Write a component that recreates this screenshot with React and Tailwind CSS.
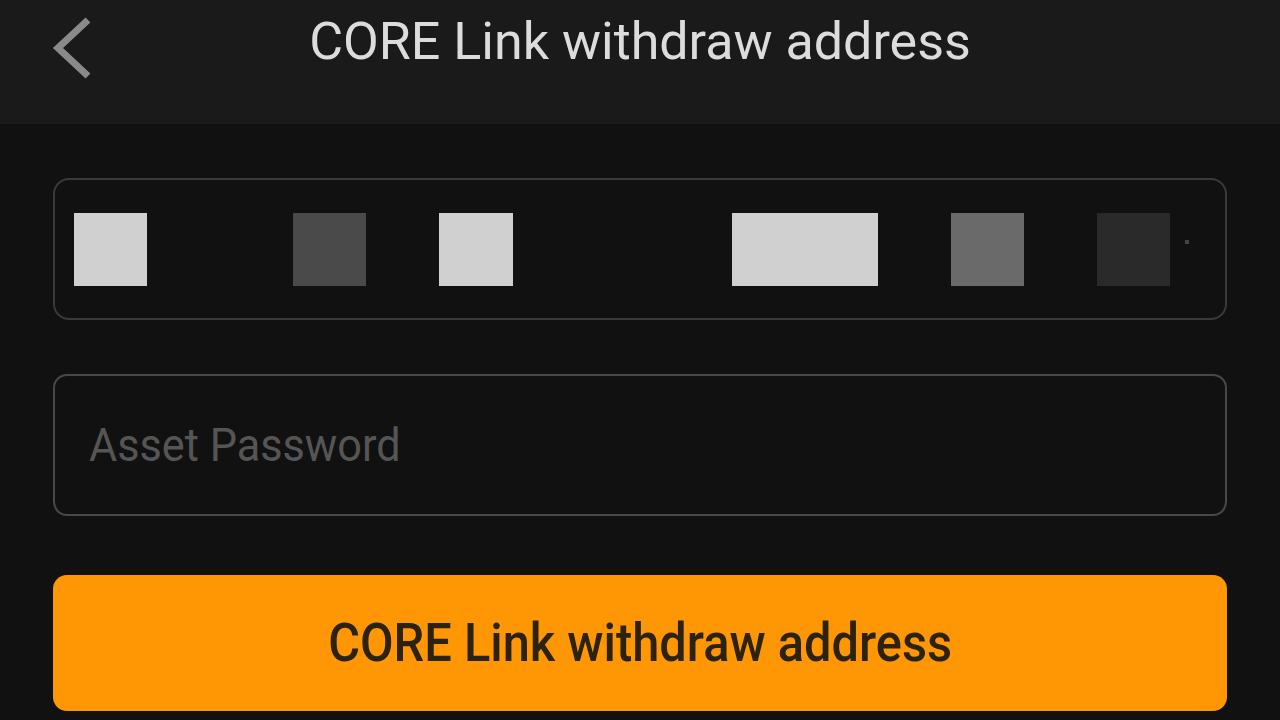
// masked address shown as a row of blocks (one entry per cell)
const cells = ['#d0d0d0', null, null, '#4a4a4a', null, '#d0d0d0', null, null, null, '#d0d0d0', '#d0d0d0', null, '#6a6a6a', null, '#2a2a2a']

export default function App() {
  return (
    <div className="flex h-[720px] w-[1280px] flex-col overflow-hidden bg-[#111111] font-['Roboto',sans-serif]">
      <header className="relative flex h-[124px] shrink-0 items-start justify-center bg-[#1a1a1a]">
        <button type="button" className="absolute left-[50px] top-[14px]">
          <svg width="44" height="68" viewBox="0 0 44 68" fill="none">
            <polyline points="38,6 8,34 38,62" stroke="#8a8a8a" strokeWidth="7" strokeLinejoin="miter" />
          </svg>
        </button>
        <h1 className="mt-[12px] text-[52px] leading-[60px] text-[#dcdcdc]">CORE Link withdraw address</h1>
      </header>

      <main className="flex flex-col px-[53px] pt-[54px]">
        <div className="flex h-[142px] items-center rounded-[16px] border-2 border-[#3a3a3a] pl-[19px]">
          <div className="flex">
            {cells.map((color, i) => (
              <div key={i} className="h-[73px] w-[73.1px]" style={{ backgroundColor: color || 'transparent' }} />
            ))}
          </div>
          <div className="ml-[15px] mt-[-14px] h-[4px] w-[4px] bg-[#444]" />
        </div>

        <div className="mt-[54px] flex h-[142px] items-center rounded-[14px] border-2 border-[#484848] px-[34px]">
          <input
            type="password"
            placeholder="Asset Password"
            className="w-full origin-left scale-x-[0.94] bg-transparent text-[46px] text-[#ddd] outline-none placeholder:text-[#555555]"
          />
        </div>

        <button
          type="button"
          className="mt-[59px] flex h-[136px] items-center justify-center rounded-[14px] bg-[#ff9604] text-[#2b2210]"
        >
          <span className="inline-block scale-x-[0.92] text-[53px] font-medium leading-[62px]">CORE Link withdraw address</span>
        </button>
      </main>
    </div>
  )
}
